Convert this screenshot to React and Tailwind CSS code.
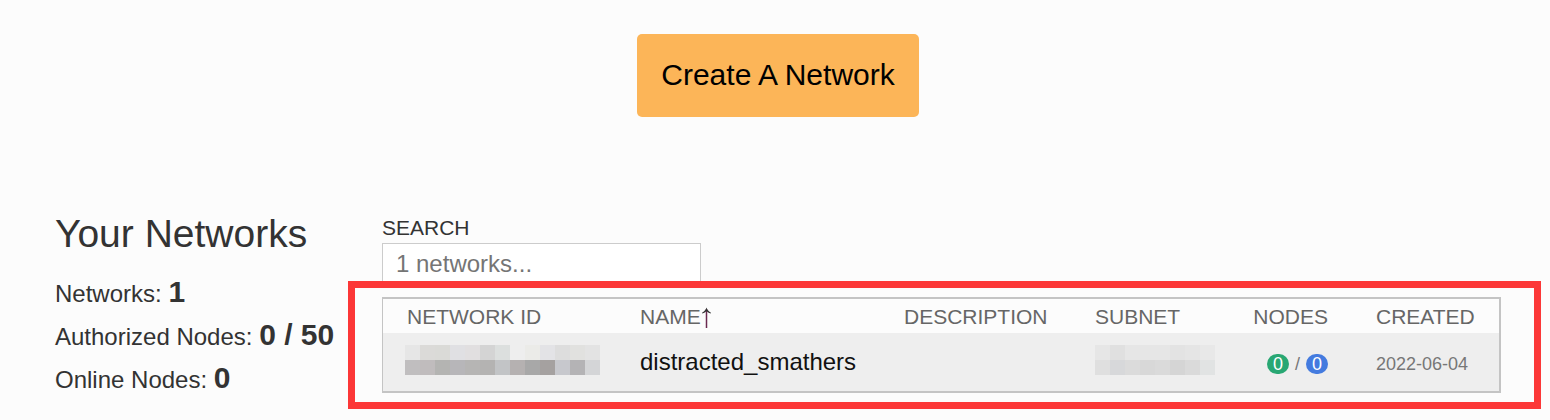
const idTiles = [
  ["#e6e6e6", "#dbdad8", "#dadad7", "#e0e0e3", "#e1dfe0", "#d4d4d4", "#dcdfde", "#eeeeee", "#ebebe8", "#e3e3e6", "#dddddd", "#e1e1df", "#e3e3e3"],
  ["#c0bebf", "#c0bcbd", "#b4b4b2", "#b7b6b9", "#b6b5b4", "#b4b3b2", "#c2c4c6", "#b5b1b1", "#a8a8a8", "#a5a1a0", "#c7c8cd", "#b4b3b5", "#d4d5d7"],
];

const subnetTiles = [
  ["#e6e6e6", "#e0e0e0", "#e6e6e6", "#e6e6e6", "#e6e6e6", "#e3e3e3", "#e5e5e5", "#e8e8e8"],
  ["#dfdfdf", "#d7d8da", "#dbdbdb", "#d8d8d8", "#dadada", "#d5d5d5", "#dadada", "#e1e3e3"],
];

function Mosaic({ rows, label }) {
  const width = rows[0].length * 15;
  return (
    <svg width={width} height="30" viewBox={`0 0 ${width} 30`} role="img" aria-label={label} shapeRendering="crispEdges" className="block">
      {rows.map((row, y) =>
        row.map((fill, x) => <rect key={`${x}-${y}`} x={x * 15} y={y * 15} width="15" height="15" fill={fill} />)
      )}
    </svg>
  );
}

function SortArrow() {
  return (
    <svg width="11" height="24" viewBox="0 0 11 24" fill="none" aria-hidden="true" className="shrink-0">
      <path d="M5.5 4V23" stroke="#6b2a50" strokeWidth="1.5" />
      <path d="M5.5 2.5C4.8 4.9 3.2 6.7 1 7.7L1.4 8.5C3.2 7.9 4.6 7 5.5 6C6.4 7 7.8 7.9 9.6 8.5L10 7.7C7.8 6.7 6.2 4.9 5.5 2.5Z" fill="#333333" />
    </svg>
  );
}

function Stat({ label, value }) {
  return (
    <p className="text-2xl leading-[41px]">
      {label}: <strong className="text-[30px] leading-[41px] font-bold">{value}</strong>
    </p>
  );
}

export default function App() {
  return (
    <main className="min-h-screen bg-[#fcfcfc] pt-[34px] pr-[49px] pb-[27px] pl-[55px] font-['Liberation_Sans',Arial,sans-serif] text-[#333333]">
      <div className="flex justify-center">
        <button type="button" className="rounded-[5px] bg-[#fcb558] px-6 pt-[18px] pb-5 text-[30px] leading-[45px] text-black">
          Create A Network
        </button>
      </div>

      <div className="mt-[91px] flex">
        <section className="w-[327px] shrink-0">
          <h1 className="mb-[11px] text-[39px] leading-[52px]">Your Networks</h1>
          <Stat label="Networks" value="1" />
          <Stat label="Authorized Nodes" value="0 / 50" />
          <Stat label="Online Nodes" value="0" />
        </section>

        <section className="min-w-0 flex-1 pt-1">
          <label htmlFor="search" className="block text-[21px] leading-[31px]">SEARCH</label>
          <input
            id="search"
            type="text"
            placeholder="1 networks..."
            className="block h-[42px] w-[319px] border border-[#cccccc] bg-white px-[13px] text-2xl placeholder:text-[#757575]"
          />

          <div className="relative mt-3">
            <div className="border-y-2 border-r-2 border-l border-[#c4c4c4]">
              <table className="w-full table-fixed border-collapse text-left">
                <colgroup>
                  <col className="w-[233px]" />
                  <col className="w-[264px]" />
                  <col />
                  <col className="w-[159px]" />
                  <col className="w-[122px]" />
                  <col className="w-[147px]" />
                </colgroup>
                <thead>
                  <tr className="h-[34px] text-[21px] leading-8 text-[#666666]">
                    <th className="px-6 pt-0.5 font-normal">NETWORK ID</th>
                    <th className="px-6 pt-0.5 font-normal" aria-sort="ascending">
                      <span className="flex items-center">NAME<SortArrow /></span>
                    </th>
                    <th className="pt-0.5 pl-6 font-normal">DESCRIPTION</th>
                    <th className="px-6 pt-0.5 font-normal">SUBNET</th>
                    <th className="pt-0.5 pr-6 text-right font-normal">NODES</th>
                    <th className="pt-0.5 pl-6 font-normal">CREATED</th>
                  </tr>
                </thead>
                <tbody>
                  <tr className="h-[58px] bg-[#eeeeee] text-[#777777]">
                    <td className="pb-1 pl-[22px]"><Mosaic rows={idTiles} label="Hidden network ID" /></td>
                    <td className="pl-6 text-2xl text-[#111111]">distracted_smathers</td>
                    <td></td>
                    <td className="pb-1 pl-6"><Mosaic rows={subnetTiles} label="Hidden subnet" /></td>
                    <td className="pr-6">
                      <div className="flex items-center justify-end gap-1.5 pt-1 text-lg leading-5">
                        <span className="w-[22px] rounded-full bg-[#28a773] text-center text-white">0</span>
                        <span>/</span>
                        <span className="w-[22px] rounded-full bg-[#447bdf] text-center text-white">0</span>
                      </div>
                    </td>
                    <td className="pt-1 pl-6 text-lg leading-5">2022-06-04</td>
                  </tr>
                </tbody>
              </table>
            </div>
            <div className="pointer-events-none absolute -top-4 -right-10 -bottom-4 -left-[34px] border-[7px] border-[#fc3737]"></div>
          </div>
        </section>
      </div>
    </main>
  );
}
